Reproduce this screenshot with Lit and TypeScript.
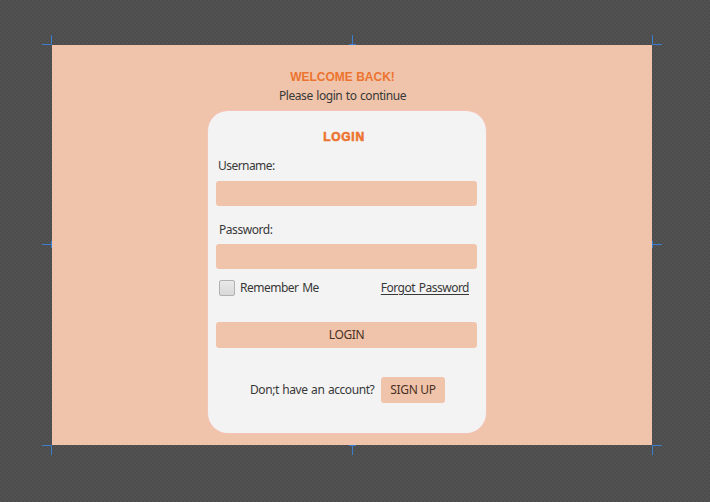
import { LitElement, html, css } from "lit";
import { customElement } from "lit/decorators.js";

@customElement("login-card")
class LoginCard extends LitElement {
  static styles = css`
    :host {
      display: flex;
      flex-direction: column;
      box-sizing: border-box;
      width: 278px;
      height: 322px;
      padding: 16px 9px 0 8px;
      background: #f3f3f3;
      border-radius: 20px;
      box-shadow: 0 0 0 1px #f5c4b8;
    }
    .title {
      margin: 1px 5px 0 0;
      text-align: center;
      font: bold 12px/18px "Liberation Sans", Arial, sans-serif;
      letter-spacing: 0.7px;
      -webkit-text-stroke: 0.6px #ec7430;
      color: #ec7430;
    }
    .label { line-height: 16px; }
    .user { margin: 12px 0 7px 2px; letter-spacing: -0.55px; }
    .pass { margin: 16px 0 6px 3px; letter-spacing: -0.45px; }
    .field, .button {
      box-sizing: border-box;
      border: 0;
      border-radius: 3px;
      padding: 0;
      background: #f0c4aa;
      font: inherit;
      color: #4a3024;
      outline: none;
    }
    .field { height: 25px; width: 261px; }
    .options {
      display: flex;
      align-items: center;
      height: 16px;
      margin: 11px 8px 0 3px;
    }
    .check {
      box-sizing: border-box;
      width: 16px;
      height: 16px;
      margin-right: 5px;
      border: 1px solid #b1b1b1;
      border-radius: 2px;
      background: linear-gradient(#e9e9e9, #d8d8d8);
    }
    .remember { letter-spacing: -0.5px; word-spacing: 1px; }
    .forgot {
      margin-left: auto;
      letter-spacing: -0.5px;
      word-spacing: 1px;
      text-decoration: underline;
      text-decoration-thickness: 1px;
      text-underline-offset: 2px;
    }
    .button { height: 26px; }
    .submit { margin-top: 26px; letter-spacing: -0.4px; }
    .signup {
      display: flex;
      align-items: center;
      margin: 29px 0 0 34px;
    }
    .ask { width: 131px; letter-spacing: -0.43px; word-spacing: 0.8px; white-space: nowrap; }
    .join { width: 64px; letter-spacing: -0.3px; }
  `;

  render() {
    return html`
      <h2 class="title">LOGIN</h2>
      <label class="label user" for="user">Username:</label>
      <input class="field" id="user" type="text" />
      <label class="label pass" for="pass">Password:</label>
      <input class="field" id="pass" type="password" />
      <div class="options">
        <span class="check"></span>
        <span class="remember">Remember Me</span>
        <span class="forgot">Forgot Password</span>
      </div>
      <button class="button submit">LOGIN</button>
      <div class="signup">
        <span class="ask">Don;t have an account?</span>
        <button class="button join">SIGN UP</button>
      </div>
    `;
  }
}

@customElement("app-root")
class AppRoot extends LitElement {
  static styles = css`
    :host {
      display: block;
      box-sizing: border-box;
      width: 710px;
      height: 502px;
      padding: 45px 0 0 52px;
      overflow: hidden;
      background: repeating-conic-gradient(#4c4c4c 0 25%, #525252 0 50%) 0 0 / 4px 4px;
      font: 12px/16px "Noto Sans", "Open Sans", sans-serif;
      color: #383838;
    }
    .stage {
      position: relative;
      box-sizing: border-box;
      width: 600px;
      height: 400px;
      padding-top: 23px;
      background: #f0c4aa;
    }
    .heading {
      margin: 0 19px 0 0;
      text-align: center;
      font: bold 12px/18px "Liberation Sans", Arial, sans-serif;
      color: #ec7430;
    }
    .hint {
      margin: 2px 19px 0 0;
      text-align: center;
      letter-spacing: -0.43px;
      word-spacing: 0.8px;
    }
    login-card { margin: 7px 0 0 156px; }
    .guides {
      position: absolute;
      left: -10px;
      top: -10px;
      pointer-events: none;
    }
  `;

  render() {
    return html`
      <main class="stage">
        <h1 class="heading">WELCOME BACK!</h1>
        <p class="hint">Please login to continue</p>
        <login-card></login-card>
        <svg class="guides" width="620" height="420" fill="none" stroke="#3d7dce">
          <path d="M0 9.5H9.5V0 M620 9.5H610.5V0 M0 410.5H9.5V420 M620 410.5H610.5V420" />
          <path d="M310.5 0V10 M307 9.5H314 M310.5 420V410 M307 410.5H314 M0 209.5H10 M9.5 206V213 M620 209.5H610 M610.5 206V213" />
        </svg>
      </main>
    `;
  }
}
